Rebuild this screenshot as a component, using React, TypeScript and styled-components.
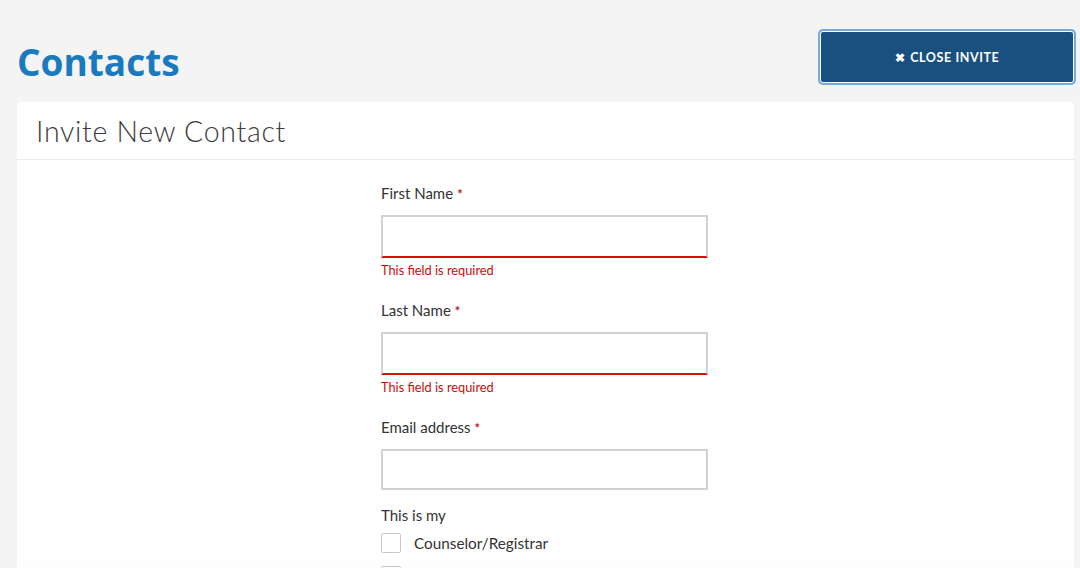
import React from 'react';
import styled, { createGlobalStyle } from 'styled-components';

const GlobalStyle = createGlobalStyle`
  html, body {
    margin: 0;
    padding: 0;
    background: #f4f4f4;
    height: 100%;
    overflow: hidden;
  }
  #root {
    height: 100%;
  }
`;

const Page = styled.div`
  display: flex;
  flex-direction: column;
  height: 100%;
  padding: 0 6px 0 17px;
  box-sizing: border-box;
`;

const TopBar = styled.div`
  display: flex;
  align-items: flex-start;
  justify-content: space-between;
  height: 102px;
  flex-shrink: 0;
`;

const PageTitle = styled.h1`
  margin: 39px 0 0;
  font-family: 'Open Sans', 'Liberation Sans', sans-serif;
  font-weight: 700;
  font-size: 37px;
  line-height: 46px;
  color: #1a7abf;
`;

const CloseButton = styled.button`
  display: flex;
  align-items: center;
  justify-content: center;
  gap: 5px;
  width: 254px;
  height: 52px;
  margin-top: 31px;
  background: #18517f;
  border: 1px solid #ffffff;
  box-shadow: 0 0 0 2px #79a9d6;
  border-radius: 3px;
  color: #ffffff;
  font-family: 'Lato', 'Liberation Sans', sans-serif;
  font-weight: 700;
  font-size: 12.5px;
  letter-spacing: 0.6px;
  cursor: pointer;
`;

const CloseIcon = styled.span`
  font-size: 12px;
`;

const Panel = styled.div`
  flex: 1;
  display: flex;
  flex-direction: column;
  background: #ffffff;
  border-radius: 4px 4px 0 0;
  width: 1057px;
  overflow: hidden;
`;

const PanelHeader = styled.div`
  flex-shrink: 0;
  height: 57px;
  display: flex;
  align-items: center;
  padding-left: 19px;
  border-bottom: 1px solid #ececec;
  font-family: 'Lato', 'Liberation Sans', sans-serif;
  font-weight: 300;
  font-size: 28.5px;
  letter-spacing: 0.7px;
  color: #3c3c3c;
`;

const PanelBody = styled.div`
  flex: 1;
  background: linear-gradient(to bottom, #ffffff calc(100% - 40px), #f5f5f5 100%);
  padding: 23px 0 0 364px;
`;

const Form = styled.form`
  display: flex;
  flex-direction: column;
  width: 327px;
  font-family: 'Lato', 'Liberation Sans', sans-serif;
`;

const Field = styled.div`
  display: flex;
  flex-direction: column;
  margin-bottom: 22px;
`;

const Label = styled.label`
  font-size: 15px;
  color: #333333;
  line-height: 20px;
  margin-bottom: 11px;
`;

const Required = styled.span`
  color: #c1141d;
  font-weight: 700;
  font-size: 13px;
  margin-left: 4px;
`;

const Input = styled.input<{ $error?: boolean }>`
  box-sizing: border-box;
  width: 327px;
  height: ${p => (p.$error ? '43px' : '41px')};
  border: 2px solid #d2d2d2;
  border-bottom: ${p => (p.$error ? '2px solid #e00b0b' : '2px solid #d2d2d2')};
  border-radius: 1px;
  background: #ffffff;
  outline: none;
`;

const ErrorText = styled.div`
  margin-top: 4px;
  font-size: 12.8px;
  line-height: 16px;
  color: #cf0a0a;
`;

const GroupLabel = styled.div`
  font-size: 15px;
  color: #333333;
  line-height: 20px;
  margin-top: -7px;
  margin-bottom: 8px;
`;

const CheckRow = styled.label`
  display: flex;
  align-items: center;
  gap: 13px;
  height: 20px;
  margin-bottom: 13px;
  font-size: 15.3px;
  color: #333333;
`;

const CheckBox = styled.span`
  box-sizing: border-box;
  width: 20px;
  height: 20px;
  border: 1px solid #c8c8c8;
  border-radius: 2px;
  background: #ffffff;
  flex-shrink: 0;
`;

const TextField = ({ label, error }: { label: string; error?: boolean }) => (
  <Field>
    <Label>
      {label}
      <Required>*</Required>
    </Label>
    <Input $error={error} />
    {error && <ErrorText>This field is required</ErrorText>}
  </Field>
);

export default function App() {
  return (
    <>
      <GlobalStyle />
      <Page>
        <TopBar>
          <PageTitle>Contacts</PageTitle>
          <CloseButton>
            <CloseIcon>✖</CloseIcon> CLOSE INVITE
          </CloseButton>
        </TopBar>
        <Panel>
          <PanelHeader>Invite New Contact</PanelHeader>
          <PanelBody>
            <Form>
              <TextField label="First Name" error />
              <TextField label="Last Name" error />
              <TextField label="Email address" />
              <GroupLabel>This is my</GroupLabel>
              <CheckRow>
                <CheckBox />
                Counselor/Registrar
              </CheckRow>
              <CheckRow>
                <CheckBox />
              </CheckRow>
            </Form>
          </PanelBody>
        </Panel>
      </Page>
    </>
  );
}
